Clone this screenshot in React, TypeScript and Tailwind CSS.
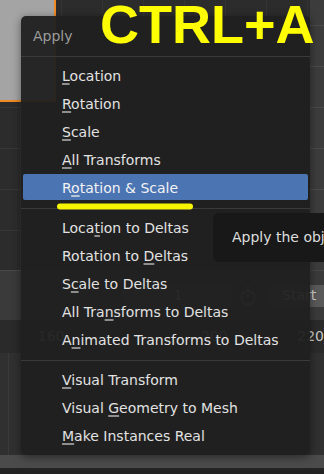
import React from "react";

type It = { pre: string; u: string; post: string; active?: boolean };

const g1: It[] = [
  { pre: "", u: "L", post: "ocation" },
  { pre: "", u: "R", post: "otation" },
  { pre: "", u: "S", post: "cale" },
  { pre: "", u: "A", post: "ll Transforms" },
  { pre: "R", u: "o", post: "tation & Scale", active: true },
];
const g2: It[] = [
  { pre: "Loca", u: "t", post: "ion to Deltas" },
  { pre: "Rotation to ", u: "D", post: "eltas" },
  { pre: "S", u: "c", post: "ale to Deltas" },
  { pre: "All Tra", u: "n", post: "sforms to Deltas" },
  { pre: "A", u: "n", post: "imated Transforms to Deltas" },
];
const g3: It[] = [
  { pre: "", u: "V", post: "isual Transform" },
  { pre: "Visual ", u: "G", post: "eometry to Mesh" },
  { pre: "", u: "M", post: "ake Instances Real" },
];

function Row({ it }: { it: It }) {
  return (
    <div className="h-[28px] px-[2px] py-[1px]">
      <div
        className={
          it.active
            ? "h-[26px] flex items-center pl-[39px] pt-[2px] bg-[#4b74b3] rounded-[2px] text-[#f2f2f2]"
            : "h-[26px] flex items-center pl-[39px] pt-[2px] text-[#e2e2e2]"
        }
      >
        <span className="whitespace-pre">
          {it.pre}
          <span
            className={
              it.active
                ? "underline decoration-2 underline-offset-[2px] decoration-[#b8c4d8]"
                : "underline decoration-2 underline-offset-[2px] decoration-[#8e8e8e]"
            }
          >
            {it.u}
          </span>
          {it.post}
        </span>
      </div>
    </div>
  );
}

function Sep() {
  return (
    <div className="h-[12px] pt-[7px]">
      <div className="h-px bg-[#3a3a3a]" />
    </div>
  );
}

export default function App() {
  return (
    <div className="relative w-[324px] h-[474px] overflow-hidden bg-[#2e2e2e] font-['DejaVu_Sans',sans-serif] text-[14px]">
      {/* background: blender layout */}
      <div className="flex flex-col h-full">
        <div className="h-[270px] flex">
          <div className="w-[310px] flex flex-col bg-[#2c2c2c] bg-[linear-gradient(#363636_1px,transparent_1px),linear-gradient(90deg,#343434_1px,transparent_1px)] bg-size-[41px_41px] bg-[position:20px_25px]">
            <div className="w-[56px] h-[102px] bg-[#a4a4a4] border-r-2 border-b-2 border-[#f08a24]" />
          </div>
          <div className="flex-1 bg-[#3c3c3c] bg-[linear-gradient(#4a4a4a_1px,transparent_1px)] bg-size-[41px_41px] bg-[position:0px_25px]" />
        </div>
        <div className="h-px bg-[#474747]" />
        <div className="h-[49px] bg-[#3a3a3a] flex items-center text-[#d0d0d0]">
          <div className="w-[123px]" />
          <div className="w-[110px] h-[26px] rounded-[4px] bg-[#4e4e4e] flex items-center justify-center">1</div>
          <div className="w-[30px] flex items-center justify-center">
            <svg width="20" height="20" viewBox="0 0 24 24" fill="none" stroke="#9a9a9a" strokeWidth="2">
              <circle cx="12" cy="14" r="8" />
              <path d="M12 14V10M10 2h4M12 2v4" />
            </svg>
          </div>
          <div className="w-[7px]" />
          <div className="flex-1 h-[22px] rounded-l-[4px] bg-[#595959] flex items-center pl-[12px] whitespace-nowrap">
            Start
          </div>
        </div>
        <div className="h-[33px] bg-[#2a2a2a] flex items-center text-[#c8c8c8]">
          <div className="w-[40px]" />
          <div className="w-[173px]">160</div>
          <div className="w-[102px]">200</div>
          <div className="whitespace-nowrap">220</div>
        </div>
        <div className="flex-1 bg-[#303030] flex">
          <div className="w-[8px]" />
          <div className="w-px bg-[#3a3a3a]" />
        </div>
        <div className="h-[13px] bg-[#4b4b4b]" />
        <div className="h-[6px] bg-[#232323]" />
      </div>

      {/* menu */}
      <div className="absolute left-[21px] top-[16px] w-[289px] rounded-[5px] bg-[#202020]/95 shadow-[0_2px_8px_rgba(0,0,0,0.45)]">
        <div className="h-[40px] flex items-center pl-[12px] pt-[1px] text-[#9c9c9c]">Apply</div>
        <div className="h-px bg-[#3a3a3a]" />
        <div className="pt-[4px]">
          {g1.map((it, i) => (
            <Row key={i} it={it} />
          ))}
        </div>
        <Sep />
        {g2.map((it, i) => (
          <Row key={i} it={it} />
        ))}
        <Sep />
        <div className="pb-[6px]">
          {g3.map((it, i) => (
            <Row key={i} it={it} />
          ))}
        </div>
      </div>

      {/* tooltip */}
      <div className="absolute left-[213px] top-[213px] w-[200px] h-[49px] rounded-[6px] bg-[#181818] flex items-center pl-[19px] text-[#dedede] whitespace-nowrap">
        Apply the object's rotation and scale
      </div>

      {/* yellow annotation underline */}
      <svg className="absolute left-0 top-0 pointer-events-none" width="324" height="474">
        <path d="M60 206.5 L190 206.5" stroke="#f6f600" strokeWidth="6" strokeLinecap="round" fill="none" />
      </svg>

      {/* CTRL+A label */}
      <div className="absolute left-[100px] top-[-3px] text-[54px] leading-none font-bold text-[#ffff00] font-['Liberation_Sans',Arial,sans-serif] whitespace-nowrap">
        CTRL+A
      </div>
    </div>
  );
}
